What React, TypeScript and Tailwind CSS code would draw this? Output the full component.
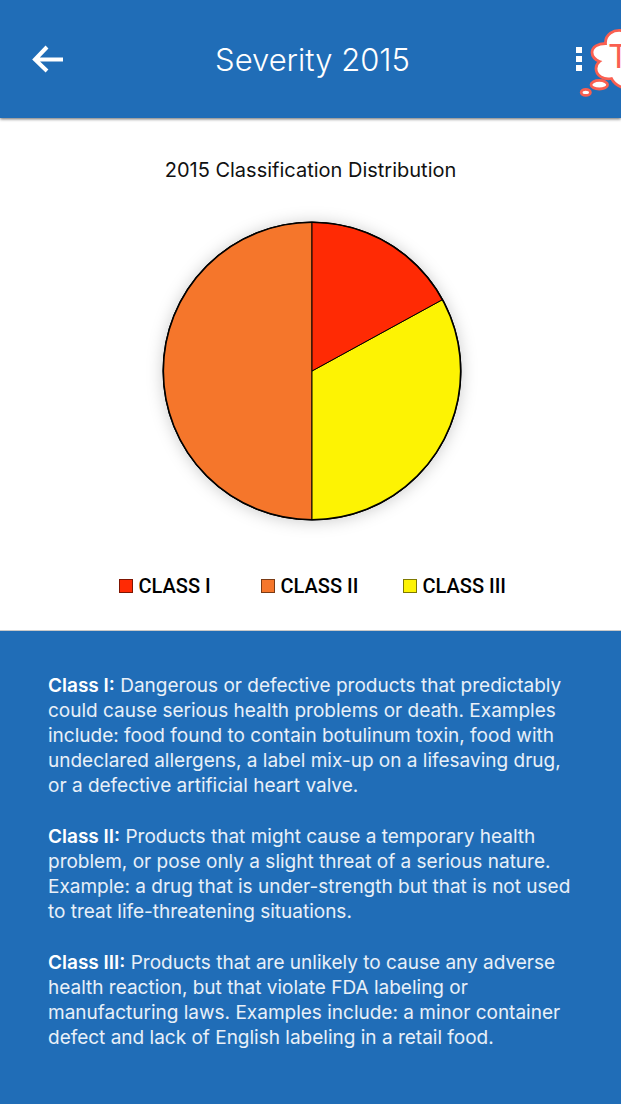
import React from 'react';

const CLASSES = [
  { name: 'CLASS I', swatch: 'bg-[#ff2a04]' },
  { name: 'CLASS II', swatch: 'bg-[#f5762b]' },
  { name: 'CLASS III', swatch: 'bg-[#fdf303]' },
];

const DESCRIPTIONS = [
  {
    term: 'Class I:',
    lines: [
      'Dangerous or defective products that predictably',
      'could cause serious health problems or death. Examples',
      'include: food found to contain botulinum toxin, food with',
      'undeclared allergens, a label mix-up on a lifesaving drug,',
      'or a defective artificial heart valve.',
    ],
  },
  {
    term: 'Class II:',
    lines: [
      'Products that might cause a temporary health',
      'problem, or pose only a slight threat of a serious nature.',
      'Example: a drug that is under-strength but that is not used',
      'to treat life-threatening situations.',
    ],
  },
  {
    term: 'Class III:',
    lines: [
      'Products that are unlikely to cause any adverse',
      'health reaction, but that violate FDA labeling or',
      'manufacturing laws. Examples include: a minor container',
      'defect and lack of English labeling in a retail food.',
    ],
  },
];

function ThoughtBubble() {
  return (
    <div className="pointer-events-none absolute top-7 right-0 h-[72px] w-[42px] overflow-hidden">
      <svg className="h-full w-full" viewBox="579 28 42 72" fill="#fff" stroke="#fa5f50" strokeWidth="2.800">
        <path d="M640 90C628 90 616 88 611.500 78.500C604 80 596 76 596 68.500C596 65.500 597 63.500 599.500 61.500C595 60 592 56 592 52.500C592 47 598 43.500 605.500 43.500C605 35 613 28.500 624 31L640 28Z" />
        <ellipse cx="599.300" cy="84.700" rx="8.300" ry="4.300" />
        <ellipse cx="585.800" cy="92.400" rx="4.600" ry="3" />
      </svg>
      <span className="absolute top-2 left-[29px] font-['Inter',sans-serif] text-[33px] leading-10 text-[#fa5f50]">T</span>
    </div>
  );
}

function PieChart() {
  return (
    <svg
      className="h-[300px] w-[300px] overflow-visible drop-shadow-[0_1px_8px_rgba(0,0,0,0.2)]"
      viewBox="0 0 300 300"
      stroke="#000"
      strokeWidth="1"
      role="img"
      aria-label="2015 Classification Distribution"
    >
      <path fill="#f5762b" d="M150 150V299A149 149 0 0 1 150 1Z" />
      <path fill="#fdf303" d="M150 150L280.700 78.500A149 149 0 0 1 150 299Z" />
      <path fill="#ff2a04" d="M150 150V1A149 149 0 0 1 280.700 78.500Z" />
      <circle cx="150" cy="150" r="148.700" fill="none" strokeWidth="1.600" />
    </svg>
  );
}

export default function App() {
  return (
    <div className="flex min-h-screen flex-col bg-[#206db7] font-['Inter',sans-serif]">
      <header className="relative z-10 grid h-[118px] grid-cols-[32px_1fr_28px] items-center bg-[#206db7] px-8 shadow-[0_1px_3px_rgba(0,0,0,0.6)]">
        <button type="button" aria-label="Back" className="flex h-8 w-8 items-center justify-center">
          <svg className="h-8 w-8" viewBox="0 0 32 32" fill="none" stroke="#fff" strokeWidth="4">
            <path d="M15 4L3 16.500L15 28M3 16.500H31" />
          </svg>
        </button>
        <h1 className="pt-0.5 text-center text-[31px] leading-10 font-light text-white">Severity 2015</h1>
        <button type="button" aria-label="More options" className="flex h-8 w-5 flex-col items-center justify-center gap-[3px] justify-self-end">
          <span className="h-1.5 w-1.5 bg-white" />
          <span className="h-1.5 w-1.5 bg-white" />
          <span className="h-1.5 w-1.5 bg-white" />
        </button>
        <ThoughtBubble />
      </header>

      <section className="flex flex-col items-center border-b border-[#c9c9c9] bg-white pt-9 pb-7">
        <h2 className="text-[20px] leading-8 text-[#111]">2015 Classification Distribution</h2>
        <div className="mt-[35px] pl-[3px]">
          <PieChart />
        </div>
        <ul className="mt-[49px] grid w-full max-w-[468px] grid-cols-3 pl-[42px]">
          {CLASSES.map((c) => (
            <li key={c.name} className="flex items-center gap-1.5 whitespace-nowrap">
              <span className={`h-3.5 w-3.5 border border-black/50 ${c.swatch}`} />
              <span className="font-['Roboto',sans-serif] text-[20px] leading-8 font-medium text-black">{c.name}</span>
            </li>
          ))}
        </ul>
      </section>

      <section className="flex flex-col gap-[26px] px-12 pt-[42px] pb-12 text-[19px] leading-[25px] text-white/90">
        {DESCRIPTIONS.map((d) => (
          <p key={d.term}>
            <strong className="font-semibold text-white">{d.term}</strong>{' '}
            {d.lines.map((line, i) => (
              <React.Fragment key={line}>
                {i > 0 && <br />}
                {line}
              </React.Fragment>
            ))}
          </p>
        ))}
      </section>
    </div>
  );
}
